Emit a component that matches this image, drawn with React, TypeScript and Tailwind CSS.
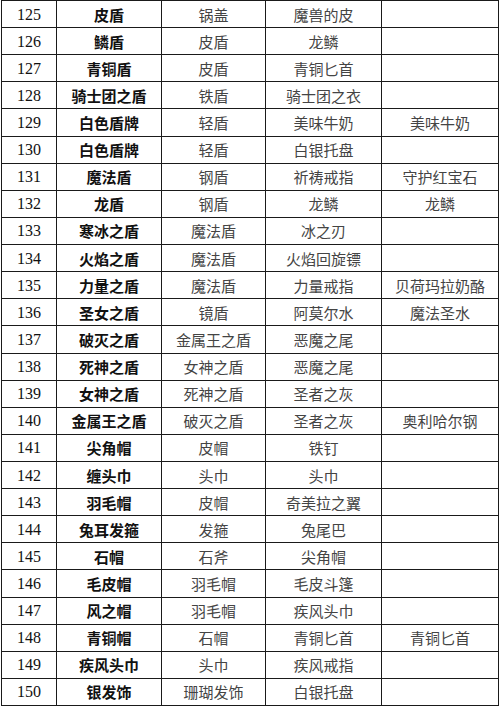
const ROWS: [number, string, string, string, string][] = [
  [125, "皮盾", "锅盖", "魔兽的皮", ""],
  [126, "鳞盾", "皮盾", "龙鳞", ""],
  [127, "青铜盾", "皮盾", "青铜匕首", ""],
  [128, "骑士团之盾", "铁盾", "骑士团之衣", ""],
  [129, "白色盾牌", "轻盾", "美味牛奶", "美味牛奶"],
  [130, "白色盾牌", "轻盾", "白银托盘", ""],
  [131, "魔法盾", "钢盾", "祈祷戒指", "守护红宝石"],
  [132, "龙盾", "钢盾", "龙鳞", "龙鳞"],
  [133, "寒冰之盾", "魔法盾", "冰之刃", ""],
  [134, "火焰之盾", "魔法盾", "火焰回旋镖", ""],
  [135, "力量之盾", "魔法盾", "力量戒指", "贝荷玛拉奶酪"],
  [136, "圣女之盾", "镜盾", "阿莫尔水", "魔法圣水"],
  [137, "破灭之盾", "金属王之盾", "恶魔之尾", ""],
  [138, "死神之盾", "女神之盾", "恶魔之尾", ""],
  [139, "女神之盾", "死神之盾", "圣者之灰", ""],
  [140, "金属王之盾", "破灭之盾", "圣者之灰", "奥利哈尔钢"],
  [141, "尖角帽", "皮帽", "铁钉", ""],
  [142, "缠头巾", "头巾", "头巾", ""],
  [143, "羽毛帽", "皮帽", "奇美拉之翼", ""],
  [144, "兔耳发箍", "发箍", "兔尾巴", ""],
  [145, "石帽", "石斧", "尖角帽", ""],
  [146, "毛皮帽", "羽毛帽", "毛皮斗篷", ""],
  [147, "风之帽", "羽毛帽", "疾风头巾", ""],
  [148, "青铜帽", "石帽", "青铜匕首", "青铜匕首"],
  [149, "疾风头巾", "头巾", "疾风戒指", ""],
  [150, "银发饰", "珊瑚发饰", "白银托盘", ""],
];

const CJK = "font-['Noto_Sans_CJK_SC',sans-serif]";

export default function App() {
  return (
    <div className="w-[500px] h-[707px] bg-white overflow-hidden">
      <div className="ml-px h-[706px] w-[498px] grid grid-cols-[55px_105px_104px_116px_117px] grid-rows-[repeat(26,minmax(0,1fr))] border-t border-l border-[#1a1a1a]">
        {ROWS.map(([n, name, a, b, c]) => (
          <div key={n} className="contents">
            <div className="flex items-center justify-center border-r border-b border-[#1a1a1a] font-['Liberation_Serif',serif] text-[16px] text-[#111] pt-px">
              {n}
            </div>
            <div className={`flex items-center justify-center border-r border-b border-[#1a1a1a] ${CJK} font-bold text-[15px] text-[#111] leading-none`}>
              {name}
            </div>
            <div className={`flex items-center justify-center border-r border-b border-[#1a1a1a] ${CJK} text-[15px] text-[#444] leading-none`}>
              {a}
            </div>
            <div className={`flex items-center justify-center border-r border-b border-[#1a1a1a] ${CJK} text-[15px] text-[#444] leading-none`}>
              {b}
            </div>
            <div className={`flex items-center justify-center border-r border-b border-[#1a1a1a] ${CJK} text-[15px] text-[#444] leading-none`}>
              {c}
            </div>
          </div>
        ))}
      </div>
    </div>
  );
}
